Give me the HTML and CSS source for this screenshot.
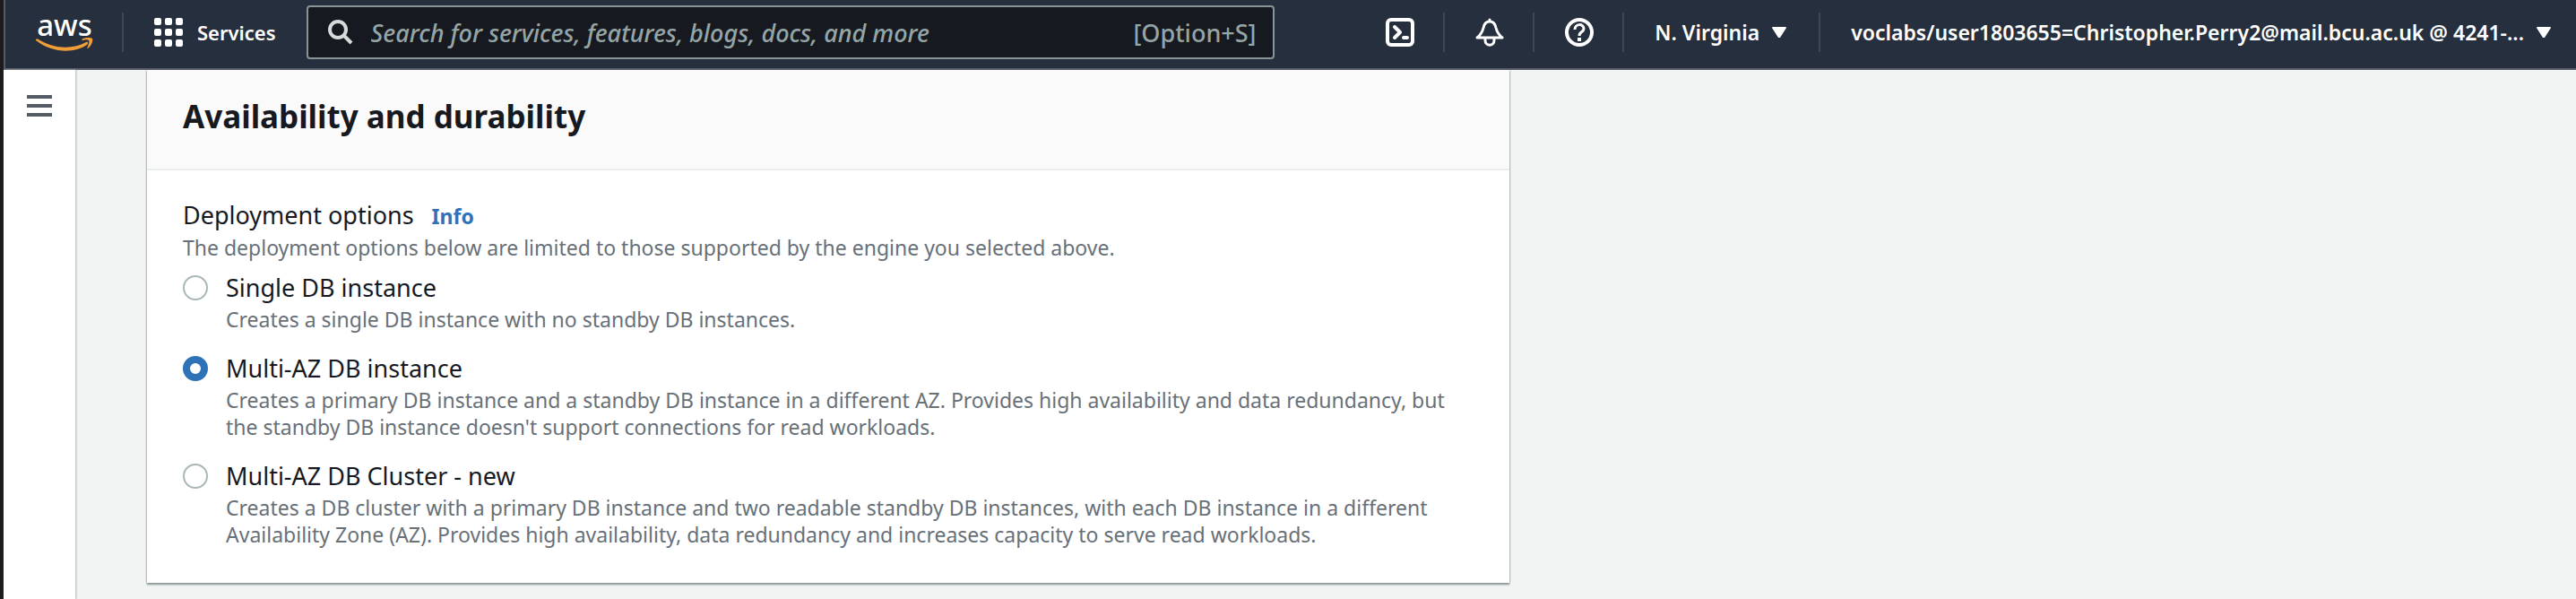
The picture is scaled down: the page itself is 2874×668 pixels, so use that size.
FILE: index.html
```html
<!DOCTYPE html>
<html lang="en">
<head>
<meta charset="utf-8">
<title>Create database - RDS</title>
<link rel="stylesheet" href="styles.css">
</head>
<body>
<div class="window">
  <header class="topnav">
    <a class="logo" href="#" aria-label="aws">
      <span class="logo-text">aws</span>
      <svg class="logo-smile" viewBox="0 0 64 16" width="64" height="16" aria-hidden="true">
        <path d="M0 2 C1 1 2 1 3 2 C20 13 42 13 56 5 C58 4 59 6 57 8 C42 18 18 17 0 3 Z" fill="#f19e39"/>
        <path d="M51 2 C55 -1 62 0 63 1 C64 4 62 9 58 12 C57 12 57 11 58 10 C59 7 60 4 59 3 C58 2 55 2 52 3 Z" fill="#f19e39"/>
      </svg>
    </a>
    <span class="divider"></span>
    <button class="nav-btn services" type="button">
      <svg width="32" height="32" viewBox="0 0 32 32" fill="#fff" aria-hidden="true">
        <rect x="0" y="0" width="8" height="8" rx="2"/><rect x="12" y="0" width="8" height="8" rx="2"/><rect x="24" y="0" width="8" height="8" rx="2"/>
        <rect x="0" y="12" width="8" height="8" rx="2"/><rect x="12" y="12" width="8" height="8" rx="2"/><rect x="24" y="12" width="8" height="8" rx="2"/>
        <rect x="0" y="24" width="8" height="8" rx="2"/><rect x="12" y="24" width="8" height="8" rx="2"/><rect x="24" y="24" width="8" height="8" rx="2"/>
      </svg>
      <span>Services</span>
    </button>
    <div class="search">
      <svg width="28" height="28" viewBox="0 0 28 28" fill="none" stroke="#d5dbdb" stroke-width="4" aria-hidden="true">
        <circle cx="11" cy="11" r="9"/><path d="M17 17 L26 26"/>
      </svg>
      <input class="search-input" type="search" aria-label="Search" placeholder="Search for services, features, blogs, docs, and more">
      <span class="shortcut">[Option+S]</span>
    </div>
    <div class="tools">
      <button class="nav-btn icon-btn" type="button" aria-label="CloudShell">
        <svg width="32" height="32" viewBox="0 0 32 32" fill="none" stroke="#fff" stroke-width="4" stroke-linecap="round" aria-hidden="true">
          <rect x="2" y="2" width="28" height="28" rx="4"/><path d="M10 10 L16 16 L10 22" stroke-linejoin="round"/><path d="M20 22 H24"/>
        </svg>
      </button>
      <span class="divider"></span>
      <button class="nav-btn icon-btn" type="button" aria-label="Notifications">
        <svg width="32" height="32" viewBox="0 0 32 32" fill="none" stroke="#fff" stroke-width="3" stroke-linejoin="round" stroke-linecap="round" aria-hidden="true">
          <path d="M16 2 V4 M2 22 C7 18 8 15 9 11 C10 6 12 4 16 4 C20 4 22 6 23 11 C24 15 25 18 30 22 Z"/><path d="M11 23 V25 C11 32 21 32 21 25 V23"/>
        </svg>
      </button>
      <span class="divider"></span>
      <button class="nav-btn icon-btn" type="button" aria-label="Support">
        <svg width="32" height="32" viewBox="0 0 32 32" fill="none" stroke="#fff" stroke-width="4" aria-hidden="true">
          <circle cx="16" cy="16" r="14"/><path d="M11 13 C11 6 21 6 21 12 C21 16 16 15 16 20" stroke-width="3"/><path d="M16 22 V26"/>
        </svg>
      </button>
      <span class="divider"></span>
      <button class="nav-btn menu-btn" type="button">
        <span>N. Virginia</span>
        <svg width="16" height="12" viewBox="0 0 16 12" aria-hidden="true"><path d="M1 0 H15 Q16 0 16 1 L9 12 H7 L0 1 Q0 0 1 0 Z" fill="#fff"/></svg>
      </button>
      <span class="divider"></span>
      <button class="nav-btn menu-btn" type="button">
        <span>voclabs/user1803655=Christopher.Perry2@mail.bcu.ac.uk @ 4241-...</span>
        <svg width="16" height="12" viewBox="0 0 16 12" aria-hidden="true"><path d="M1 0 H15 Q16 0 16 1 L9 12 H7 L0 1 Q0 0 1 0 Z" fill="#fff"/></svg>
      </button>
    </div>
  </header>
  <div class="body">
    <nav class="side">
      <button class="burger" type="button" aria-label="Open navigation">
        <svg width="28" height="24" viewBox="0 0 28 24" fill="#545b64" aria-hidden="true"><rect width="28" height="4"/><rect y="10" width="28" height="4"/><rect y="20" width="28" height="4"/></svg>
      </button>
    </nav>
    <main class="content">
      <section class="panel">
        <div class="panel-head"><h2 class="panel-title">Availability and durability</h2></div>
        <fieldset class="panel-body">
          <div class="field-head"><span class="field-label">Deployment options</span><a class="info" href="#">Info</a></div>
          <p class="hint">The deployment options below are limited to those supported by the engine you selected above.</p>
          <div class="options">
            <div class="option">
              <input class="radio" type="radio" name="deployment" id="single">
              <label for="single"><span class="option-title">Single DB instance</span>
              <span class="hint">Creates a single DB instance with no standby DB instances.</span></label>
            </div>
            <div class="option">
              <input class="radio" type="radio" name="deployment" id="multi" checked>
              <label for="multi"><span class="option-title">Multi-AZ DB instance</span>
              <span class="hint">Creates a primary DB instance and a standby DB instance in a different AZ. Provides high availability and data redundancy, but the standby DB instance doesn't support connections for read workloads.</span></label>
            </div>
            <div class="option">
              <input class="radio" type="radio" name="deployment" id="cluster">
              <label for="cluster"><span class="option-title">Multi-AZ DB Cluster - new</span>
              <span class="hint">Creates a DB cluster with a primary DB instance and two readable standby DB instances, with each DB instance in a different Availability Zone (AZ). Provides high availability, data redundancy and increases capacity to serve read workloads.</span></label>
            </div>
          </div>
        </fieldset>
      </section>
    </main>
  </div>
</div>
</body>
</html>
```
FILE: styles.css
```css
* { box-sizing: border-box; }
body {
  margin: 0;
  background: #f2f3f3;
  color: #16191f;
  font-family: "Noto Sans", "Open Sans", sans-serif;
}
button, input { font: inherit; color: inherit; }
.window {
  min-height: 100vh;
  display: flex;
  flex-direction: column;
  border-left: 4px solid #1c1c1c;
}
.topnav {
  display: flex;
  align-items: center;
  height: 78px;
  padding: 0 28px 4px 34px;
  background: #262f3e;
  border-left: 2px solid #545b64;
  border-bottom: 2px solid #545b64;
  color: #fff;
  font-size: 23px;
  font-weight: 600;
}
.logo {
  width: 64px;
  display: flex;
  flex-direction: column;
  align-items: center;
  color: #fff;
  text-decoration: none;
}
.logo-text { font-size: 33px; line-height: 28px; font-weight: 500; }
.logo-smile { display: block; }
.divider { flex: none; width: 2px; height: 44px; background: #414750; }
.logo + .divider { margin-left: 32px; }
.nav-btn {
  display: flex;
  align-items: center;
  padding: 0;
  border: 0;
  background: none;
  white-space: nowrap;
  line-height: 30px;
}
.services { gap: 16px; margin: 0 34px; font-size: 22px; }
.search {
  flex: 1 1 0;
  max-width: 1080px;
  height: 60px;
  display: flex;
  align-items: center;
  padding: 0 18px 0 22px;
  border: 2px solid #879596;
  border-radius: 4px;
  background: #16191f;
  color: #95a5a6;
  font-size: 27px;
  font-weight: 500;
}
.search-input {
  flex: 1;
  min-width: 0;
  margin-left: 20px;
  padding: 0;
  border: 0;
  outline: 0;
  background: none;
}
.search-input::placeholder { color: #95a5a6; font-style: italic; opacity: 1; }
.tools { display: flex; align-items: center; margin-left: auto; }
.icon-btn { margin: 0 32px 0 34px; }
.menu-btn { gap: 14px; margin: 0 36px 0 34px; }
.menu-btn:last-child { margin-right: 0; }
.body { flex: 1; display: flex; }
.side {
  width: 80px;
  background: #fff;
  box-shadow: 1px 0 2px #aab7b8;
}
.burger { display: block; margin: 28px 26px; padding: 0; border: 0; background: none; }
.burger svg { display: block; }
.content { flex: 1; padding: 0 80px 8px; }
.panel {
  max-width: 1520px;
  background: #fff;
  box-shadow: 0 2px 2px #879596, 0 0 2px #879596;
  clip-path: inset(0 -8px -8px -8px);
}
.panel-head { padding: 30px 40px 36px; background: #fafafa; border-bottom: 2px solid #eaeded; }
.panel-title { margin: 0; font-size: 35px; line-height: 44px; font-weight: 700; }
.panel-body { margin: 0; border: 0; padding: 33px 40px 39px; }
.field-head { display: flex; align-items: baseline; gap: 20px; line-height: 34px; margin-bottom: 3px; }
.field-label, .option-title { font-size: 27px; line-height: 34px; font-weight: 400; }
.info { color: #2e73b8; font-size: 23px; font-weight: 700; text-decoration: none; }
.hint { margin: 0; color: #687078; font-size: 23px; line-height: 30px; font-weight: 400; }
.options { display: flex; flex-direction: column; gap: 23px; margin-top: 13px; }
.option { display: flex; align-items: flex-start; gap: 20px; }
.option label { display: flex; flex-direction: column; gap: 3px; }
.radio {
  appearance: none;
  flex: none;
  width: 28px;
  height: 28px;
  margin: 3px 0;
  border: 2px solid #aab7b8;
  border-radius: 50%;
  background: #fff;
}
.radio:checked { border: 8px solid #2e73b8; }
```
